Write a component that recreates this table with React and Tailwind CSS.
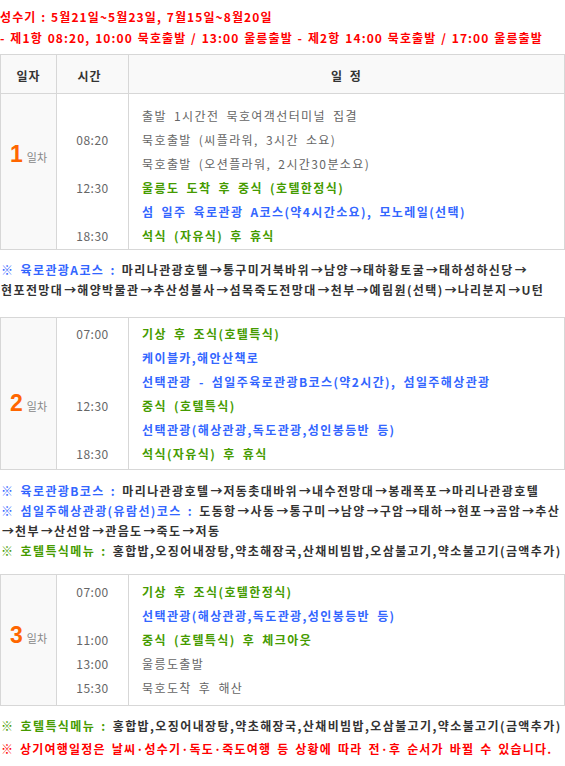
import React from "react";

const G = "text-[#666666]";
const GR = "text-[#459b00] font-bold";
const BL = "text-[#3366ff] font-bold";

const day1 = [
  ["", "출발 1시간전 묵호여객선터미널 집결", G],
  ["08:20", "묵호출발 (씨플라워, 3시간 소요)", G],
  ["", "묵호출발 (오션플라워, 2시간30분소요)", G],
  ["12:30", "울릉도 도착 후 중식 (호텔한정식)", GR],
  ["", "섬 일주 육로관광 A코스(약4시간소요), 모노레일(선택)", BL],
  ["18:30", "석식 (자유식) 후 휴식", GR],
];
const day2 = [
  ["07:00", "기상 후 조식(호텔특식)", GR],
  ["", "케이블카,해안산책로", BL],
  ["", "선택관광 - 섬일주육로관광B코스(약2시간), 섬일주해상관광", BL],
  ["12:30", "중식 (호텔특식)", GR],
  ["", "선택관광(해상관광,독도관광,성인봉등반 등)", BL],
  ["18:30", "석식(자유식) 후 휴식", GR],
];
const day3 = [
  ["07:00", "기상 후 조식(호텔한정식)", GR],
  ["", "선택관광(해상관광,독도관광,성인봉등반 등)", BL],
  ["11:00", "중식 (호텔특식) 후 체크아웃", GR],
  ["13:00", "울릉도출발", G],
  ["15:30", "묵호도착 후 해산", G],
];

function Arrows({ text }) {
  const parts = text.split("→");
  return (
    <>
      {parts.map((p, i) => (
        <React.Fragment key={i}>
          {i > 0 && <span className="inline-block w-[14px] text-center tracking-[0px]">→</span>}
          {p}
        </React.Fragment>
      ))}
    </>
  );
}

function DayLabel({ n, top }) {
  return (
    <div className={`flex justify-center ${top}`}>
      <div className="flex items-end gap-[4px]">
        <span className="font-['Liberation_Sans',sans-serif] font-bold text-[23px] leading-[17px] text-[#ff6600] tracking-[0px]">
          {n}
        </span>
        <span className="text-[11px] leading-[11px] text-[#888888] tracking-[0px]">일차</span>
      </div>
    </div>
  );
}

function DayRows({ rows, pad }) {
  return (
    <>
      <div className={`border-r border-[#d7d7d7] ${pad}`}>
        {rows.map((r, i) => (
          <div key={i} className="h-[24px] leading-[24px] text-center text-[#666666] tracking-[0.5px]">
            {r[0]}
          </div>
        ))}
      </div>
      <div className={`pl-[13px] ${pad}`}>
        {rows.map((r, i) => (
          <div
            key={i}
            className={`h-[24px] leading-[24px] whitespace-nowrap tracking-[1.4px] [word-spacing:3px] ${r[2]}`}
          >
            {r[1]}
          </div>
        ))}
      </div>
    </>
  );
}

function Note({ label, color, children }) {
  return (
    <div className="whitespace-nowrap">
      <span className={color}>{label}</span>
      <span className="text-[#333333]">
        {" "}
        <Arrows text={children} />
      </span>
    </div>
  );
}

export default function App() {
  return (
    <div className="w-[565px] bg-white font-['Noto_Sans_CJK_KR','Noto_Sans',sans-serif] text-[12px]">
      <div className="pt-[6px] text-[#ff0000] font-bold leading-[21px] tracking-[1.1px] [word-spacing:1px] whitespace-nowrap">
        <div>성수기 : 5월21일~5월23일, 7월15일~8월20일</div>
        <div>- 제1항 08:20, 10:00 묵호출발 / 13:00 울릉출발 - 제2항 14:00 묵호출발 / 17:00 울릉출발</div>
      </div>

      {/* header + day1 */}
      <div className="mt-[6px] border border-[#d7d7d7]">
        <div className="grid grid-cols-[56px_72px_1fr] bg-[#f9f9f9] border-b border-[#d7d7d7] h-[39px] font-bold text-[#333333]">
          <div className="border-r border-[#d7d7d7] flex items-center justify-center pt-[3px] tracking-[1px]">일자</div>
          <div className="border-r border-[#d7d7d7] flex items-center justify-center pt-[3px] pr-[6px] tracking-[1px]">시간</div>
          <div className="flex items-center justify-center pt-[3px] tracking-[1px] [word-spacing:3px]">일 정</div>
        </div>
        <div className="grid grid-cols-[56px_72px_1fr]">
          <div className="bg-[#f9f9f9] border-r border-[#d7d7d7]">
            <DayLabel n="1" top="pt-[52px]" />
          </div>
          <DayRows rows={day1} pad="pt-[10px] pb-[1px]" />
        </div>
      </div>

      <div className="mt-[10px] font-bold leading-[20px] tracking-[1.4px] [word-spacing:2px] pl-[1px]">
        <Note label="※ 육로관광A코스 :" color="text-[#3366ff]">
          마리나관광호텔→통구미거북바위→남양→태하황토굴→태하성하신당→
        </Note>
        <div className="whitespace-nowrap text-[#333333]">
          <Arrows text="현포전망대→해양박물관→추산성불사→섬목죽도전망대→천부→예림원(선택)→나리분지→U턴" />
        </div>
      </div>

      {/* day2 */}
      <div className="mt-[17px] border border-[#d7d7d7]">
        <div className="grid grid-cols-[56px_72px_1fr]">
          <div className="bg-[#f9f9f9] border-r border-[#d7d7d7]">
            <DayLabel n="2" top="pt-[77px]" />
          </div>
          <DayRows rows={day2} pad="pt-[4px] pb-[3px]" />
        </div>
      </div>

      <div className="mt-[11px] font-bold leading-[20px] tracking-[1.4px] [word-spacing:2px] pl-[1px]">
        <Note label="※ 육로관광B코스 :" color="text-[#3366ff]">
          마리나관광호텔→저동촛대바위→내수전망대→봉래폭포→마리나관광호텔
        </Note>
        <Note label="※ 섬일주해상관광(유람선)코스 :" color="text-[#3366ff]">
          도동항→사동→통구미→남양→구암→태하→현포→곰암→추산
        </Note>
        <div className="whitespace-nowrap text-[#333333]">
          <Arrows text="→천부→산선암→관음도→죽도→저동" />
        </div>
        <Note label="※ 호텔특식메뉴 :" color="text-[#459b00]">
          홍합밥,오징어내장탕,약초해장국,산채비빔밥,오삼불고기,약소불고기(금액추가)
        </Note>
      </div>

      {/* day3 */}
      <div className="mt-[13px] border border-[#d7d7d7]">
        <div className="grid grid-cols-[56px_72px_1fr]">
          <div className="bg-[#f9f9f9] border-r border-[#d7d7d7]">
            <DayLabel n="3" top="pt-[52px]" />
          </div>
          <DayRows rows={day3} pad="pt-[5px] pb-[5px]" />
        </div>
      </div>

      <div className="mt-[8px] font-bold leading-[23px] tracking-[1.4px] [word-spacing:2px] pl-[1px] pb-[6px]">
        <Note label="※ 호텔특식메뉴 :" color="text-[#459b00]">
          홍합밥,오징어내장탕,약초해장국,산채비빔밥,오삼불고기,약소불고기(금액추가)
        </Note>
        <div className="whitespace-nowrap text-[#ff0000] tracking-[1.2px]">
          ※ 상기여행일정은 날씨·성수기·독도·죽도여행 등 상황에 따라 전·후 순서가 바뀔 수 있습니다.
        </div>
      </div>
    </div>
  );
}
